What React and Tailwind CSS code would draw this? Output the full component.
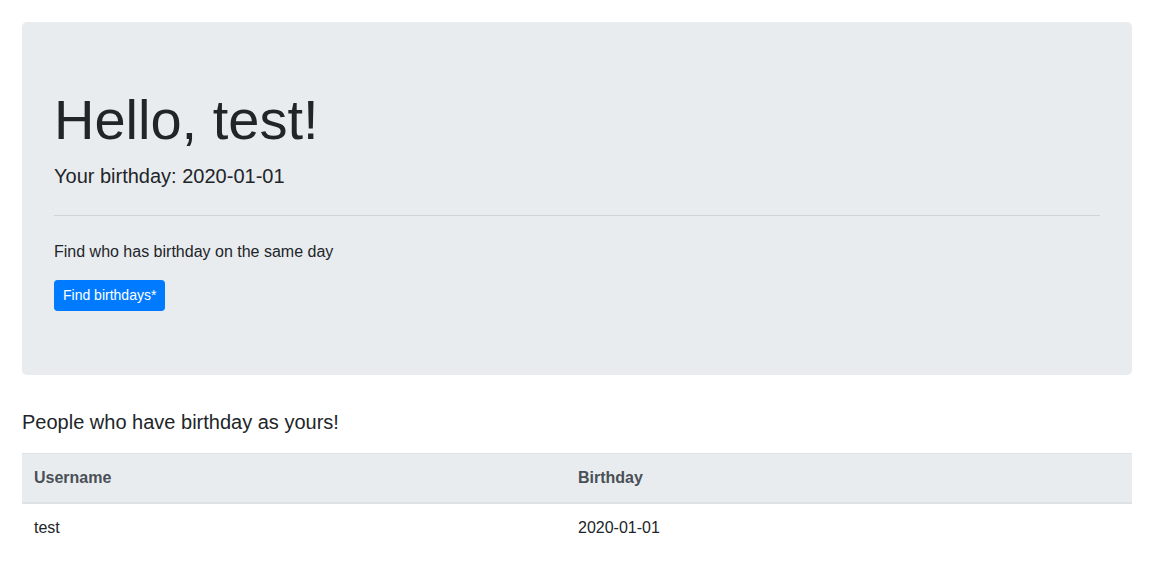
export default function App() {
  const people = [{ username: "test", birthday: "2020-01-01" }];

  return (
    <div className="min-h-screen bg-white font-['Liberation_Sans',Arial,sans-serif] text-[#212529]">
      <div className="ml-[22px] w-[1110px] pt-[22px]">
        <section className="mb-8 rounded-[4.8px] bg-[#e9ecef] px-8 py-16">
          <h1 className="mb-2 text-[56px] font-light leading-[1.2]">Hello, test!</h1>
          <p className="text-[20px] font-light leading-[30px]">Your birthday: 2020-01-01</p>
          <hr className="my-6 border-t border-black/10" />
          <p className="mb-4 text-base leading-6">Find who has birthday on the same day</p>
          <button
            type="button"
            className="rounded-[3.2px] border border-[#007bff] bg-[#007bff] px-2 py-1 text-sm leading-[21px] text-white"
          >
            Find birthdays*
          </button>
        </section>

        <p className="mb-4 text-[20px] font-light leading-[30px]">People who have birthday as yours!</p>

        <table className="w-full border-collapse text-left text-base leading-6">
          <thead>
            <tr className="bg-[#e9ecef] text-[#495057]">
              <th className="w-[544px] border-t border-b-2 border-[#dee2e6] p-3 font-bold">Username</th>
              <th className="border-t border-b-2 border-[#dee2e6] p-3 font-bold">Birthday</th>
            </tr>
          </thead>
          <tbody>
            {people.map((person) => (
              <tr key={person.username}>
                <td className="border-t border-[#dee2e6] p-3">{person.username}</td>
                <td className="border-t border-[#dee2e6] p-3">{person.birthday}</td>
              </tr>
            ))}
          </tbody>
        </table>
      </div>
    </div>
  );
}
